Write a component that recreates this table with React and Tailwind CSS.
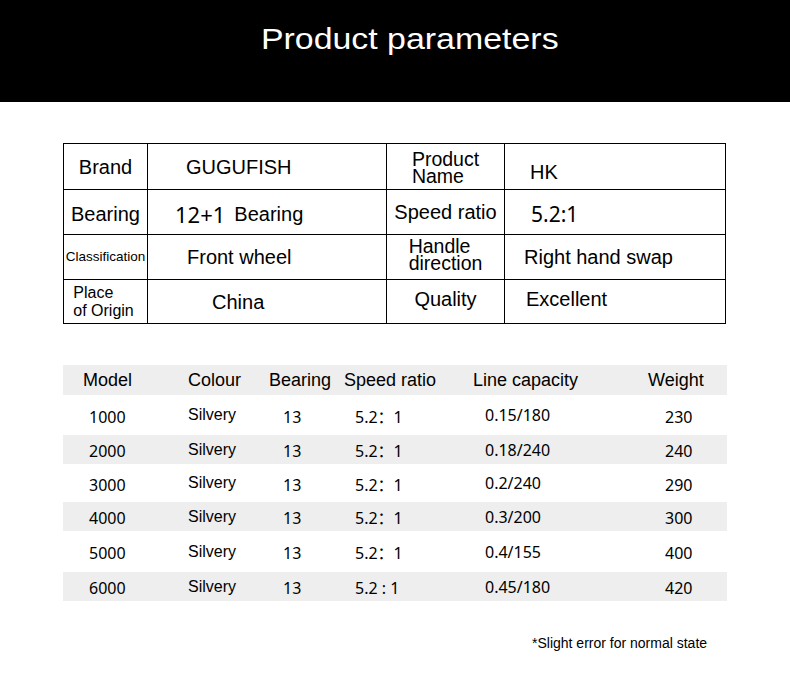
import React from 'react'

// ligne du tableau des modèles
const models = [
  { h: 'h-[40px]', bg: 'bg-white', v: ['1000', 'Silvery', '13', '5.2：1', '0.15/180', '230'] },
  { h: 'h-[29px]', bg: 'bg-[#eeeeee]', v: ['2000', 'Silvery', '13', '5.2：1', '0.18/240', '240'] },
  { h: 'h-[38px]', bg: 'bg-white', v: ['3000', 'Silvery', '13', '5.2：1', '0.2/240', '290'] },
  { h: 'h-[29px]', bg: 'bg-[#eeeeee]', v: ['4000', 'Silvery', '13', '5.2：1', '0.3/200', '300'] },
  { h: 'h-[41px]', bg: 'bg-white', v: ['5000', 'Silvery', '13', '5.2：1', '0.4/155', '400'] },
  { h: 'h-[29px]', bg: 'bg-[#eeeeee]', v: ['6000', 'Silvery', '13', '5.2 : 1', '0.45/180', '420'] },
]

function Cell({ className = '', children }) {
  return (
    <div className={`flex items-center border-r border-b border-black whitespace-nowrap ${className}`}>
      {children}
    </div>
  )
}

export default function App() {
  return (
    <div className="min-h-screen w-full overflow-hidden bg-white text-black font-['Liberation_Sans',Arial,sans-serif]">
      {/* Header */}
      <header className="flex h-[102px] justify-center bg-black pt-[24px] pl-[30px]">
        <h1 className="w-fit text-white text-[30px] leading-[30px] scale-x-[1.13] whitespace-nowrap">Product parameters</h1>
      </header>

      {/* Paramètres */}
      <div className="mt-[41px] ml-[63px] w-[663px] border-l border-t border-black grid grid-cols-[84px_239px_118px_221px] grid-rows-[46px_45px_45px_44px] text-[20px] leading-none">
        <Cell className="justify-center">Brand</Cell>
        <Cell className="pl-[38px]">GUGUFISH</Cell>
        <Cell className="justify-center pt-[3px]">
          <div className="text-[19.5px] leading-[17px]">Product<br />Name</div>
        </Cell>
        <Cell className="pl-[25px] pt-[10px]">HK</Cell>

        <Cell className="justify-center pt-[4px]">Bearing</Cell>
        <Cell className="pl-[27px] pt-[3px]">
          <span className="font-['Noto_Sans',sans-serif] text-[22px]">12+1</span>
          <span className="ml-[9px]">Bearing</span>
        </Cell>
        <Cell className="justify-center">Speed ratio</Cell>
        <Cell className="pl-[26px] pt-[5px] font-['Noto_Sans',sans-serif] text-[21px]">5.2:1</Cell>

        <Cell className="justify-center text-[13.5px]">Classification</Cell>
        <Cell className="pl-[39px]">Front wheel</Cell>
        <Cell className="justify-center pb-[5px]">
          <div className="text-[19.5px] leading-[17px]">Handle<br />direction</div>
        </Cell>
        <Cell className="pl-[19px]">Right hand swap</Cell>

        <Cell className="justify-center pr-[4px] text-[16px]">
          <div className="leading-[18px]">Place<br />of Origin</div>
        </Cell>
        <Cell className="pl-[64px]">China</Cell>
        <Cell className="justify-center pb-[5px]">Quality</Cell>
        <Cell className="pl-[21px] pb-[5px]">Excellent</Cell>
      </div>

      {/* Modèles */}
      <div className="mt-[41px] ml-[63px] w-[664px]">
        <div className="flex h-[30px] items-center bg-[#eeeeee] pl-[20px] text-[18px] whitespace-nowrap">
          <div className="w-[105px]">Model</div>
          <div className="w-[81px]">Colour</div>
          <div className="w-[75px]">Bearing</div>
          <div className="w-[129px]">Speed ratio</div>
          <div className="w-[175px]">Line capacity</div>
          <div>Weight</div>
        </div>
        {models.map((m, i) => (
          <div key={i} className={`flex items-center pl-[26px] whitespace-nowrap text-[16px] ${m.h} ${m.bg}`}>
            <div className="w-[99px] font-['Noto_Sans','Noto_Sans_CJK_SC',sans-serif] pt-[3px]">{m.v[0]}</div>
            <div className="w-[95px]">{m.v[1]}</div>
            <div className="w-[72px] font-['Noto_Sans','Noto_Sans_CJK_SC',sans-serif] pt-[3px]">{m.v[2]}</div>
            <div className="w-[130px] font-['Noto_Sans','Noto_Sans_CJK_SC',sans-serif] pt-[3px]">{m.v[3]}</div>
            <div className="w-[180px] font-['Noto_Sans','Noto_Sans_CJK_SC',sans-serif]">{m.v[4]}</div>
            <div className="font-['Noto_Sans','Noto_Sans_CJK_SC',sans-serif] pt-[3px]">{m.v[5]}</div>
          </div>
        ))}
      </div>

      <p className="mt-[34px] pl-[532px] text-[14px] leading-[16px] pb-[20px]">*Slight error for normal state</p>
    </div>
  )
}
